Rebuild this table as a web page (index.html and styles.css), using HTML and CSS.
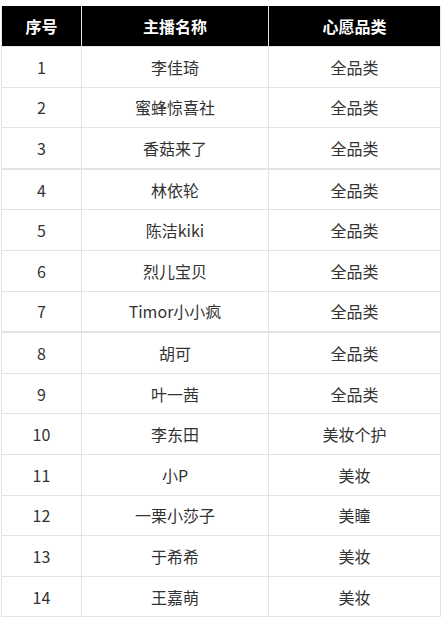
FILE: index.html
```html
<!DOCTYPE html>
<html lang="zh-CN">
<head>
<meta charset="utf-8">
<link rel="stylesheet" href="styles.css">
</head>
<body>
<div class="wrap">
<table class="list">
<colgroup><col class="c1"><col class="c2"><col class="c3"></colgroup>
<thead>
<tr><th>序号</th><th>主播名称</th><th>心愿品类</th></tr>
</thead>
<tbody>
<tr><td>1</td><td>李佳琦</td><td>全品类</td></tr>
<tr><td>2</td><td>蜜蜂惊喜社</td><td>全品类</td></tr>
<tr class="sep"><td>3</td><td>香菇来了</td><td>全品类</td></tr>
<tr><td>4</td><td>林依轮</td><td>全品类</td></tr>
<tr><td>5</td><td>陈洁kiki</td><td>全品类</td></tr>
<tr><td>6</td><td>烈儿宝贝</td><td>全品类</td></tr>
<tr class="sep"><td>7</td><td>Timor小小疯</td><td>全品类</td></tr>
<tr><td>8</td><td>胡可</td><td>全品类</td></tr>
<tr><td>9</td><td>叶一茜</td><td>全品类</td></tr>
<tr><td>10</td><td>李东田</td><td>美妆个护</td></tr>
<tr><td>11</td><td>小P</td><td>美妆</td></tr>
<tr><td>12</td><td>一栗小莎子</td><td>美瞳</td></tr>
<tr><td>13</td><td>于希希</td><td>美妆</td></tr>
<tr><td>14</td><td>王嘉萌</td><td>美妆</td></tr>
</tbody>
</table>
</div>
</body>
</html>
```
FILE: styles.css
```css
html, body {
  margin: 0;
  padding: 0;
  background: #fff;
}
.wrap {
  padding: 6px 8px 0 1px;
}
.list {
  width: 439px;
  border-collapse: collapse;
  table-layout: fixed;
  font-family: "Noto Sans CJK SC", "Noto Sans", sans-serif;
  font-size: 16px;
  color: #333;
}
.c1 { width: 80px; }
.c2 { width: 187px; }
.c3 { width: 172px; }
.list th {
  background: #000;
  color: #fff;
  font-weight: bold;
  height: 40px;
  padding: 0;
  text-align: center;
  border: 1px solid #e6e6e6;
  border-top: none;
}
.list td {
  height: 39.6px;
  padding: 0;
  text-align: center;
  border: 1px solid #e3e3e3;
}
.list tr.sep td {
  border-bottom: 2px solid #e3e3e3;
}
```
